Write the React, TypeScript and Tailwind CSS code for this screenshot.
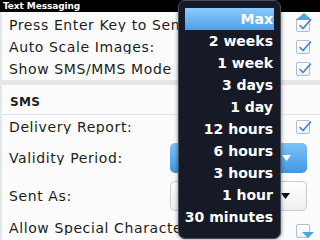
import React from "react";

const FONT = { fontFamily: '"DejaVu Sans", "Liberation Sans", sans-serif' };

const OPTIONS = ["Max", "2 weeks", "1 week", "3 days", "1 day", "12 hours", "6 hours", "3 hours", "1 hour", "30 minutes"];

function Check({ on = true }: { on?: boolean }) {
  return (
    <div className="relative w-[14px] h-[14px] rounded-[2px] border border-[#b4bcc6] bg-gradient-to-b from-white to-[#eef1f4]">
      {on && (
        <svg className="absolute left-[1px] top-[-2px]" width="14" height="14" viewBox="0 0 14 14">
          <path d="M2 8.5 L5 11.5 L12.5 3" fill="none" stroke="#3d7fd0" strokeWidth="1.6" strokeLinecap="round" strokeLinejoin="round" />
        </svg>
      )}
    </div>
  );
}

function Row({ label, children, h = "h-[22px]" }: { label: string; children?: React.ReactNode; h?: string }) {
  return (
    <div className={`flex items-center justify-between ${h} pl-[7px]`}>
      <span className="max-w-[176px] overflow-hidden text-[14px] tracking-[0.6px] leading-none text-[#1c1c1c] whitespace-nowrap">{label}</span>
      {children}
    </div>
  );
}

export default function App() {
  return (
    <div className="relative w-[320px] h-[240px] overflow-hidden bg-[#f7f8f8]" style={FONT}>
      <div className="h-[12px] bg-black flex items-center pl-[3px]">
        <span className="text-white text-[9px] font-bold leading-none tracking-[-0.1px]">Text Messaging</span>
      </div>

      <div className="bg-[#fcfcfc] border-l-2 border-[#e3e7e9]">
        <div className="h-[2px]" />
        <Row label="Press Enter Key to Send:">
          <div className="mr-[10px]"><Check /></div>
        </Row>
        <Row label="Auto Scale Images:">
          <div className="mr-[10px]"><Check /></div>
        </Row>
        <Row label="Show SMS/MMS Mode Indicator:">
          <div className="mr-[10px]"><Check /></div>
        </Row>
      </div>
      <div className="h-[5px] bg-[#e4e7e8]" />

      <div className="bg-[#fcfcfc] border-l-2 border-[#e3e7e9]">
        <div className="h-[30px] flex items-center pl-[8px] pt-[4px] border-b border-[#e0e3e5]">
          <span className="text-[12px] font-bold leading-none text-[#1c1c1c] tracking-[0.3px]">SMS</span>
        </div>
        <Row label="Delivery Report:" h="h-[24px]">
          <div className="mr-[10px]"><Check /></div>
        </Row>
        <Row label="Validity Period:" h="h-[38px]">
          <div className="mr-[13px] w-[137px] h-[30px] rounded-[5px] bg-gradient-to-b from-[#7cc2f6] to-[#3f98e2] flex items-center justify-end pr-[16px]">
            <svg width="9" height="6" viewBox="0 0 9 6"><path d="M0 0 H9 L4.5 6 Z" fill="#ffffff" /></svg>
          </div>
        </Row>
        <Row label="Sent As:" h="h-[38px]">
          <div className="mr-[13px] w-[137px] h-[30px] rounded-[5px] border border-[#c8cdd2] bg-gradient-to-b from-white to-[#eceff1] flex items-center justify-end pr-[16px]">
            <svg width="9" height="6" viewBox="0 0 9 6"><path d="M0 0 H9 L4.5 6 Z" fill="#111111" /></svg>
          </div>
        </Row>
        <Row label="Allow Special Characters:" h="h-[26px]">
          <div className="mr-[10px] mt-[6px]"><Check on={false} /></div>
        </Row>
      </div>

      {/* scroll indicators */}
      <svg className="absolute left-[296px] top-[13px]" width="16" height="7" viewBox="0 0 16 7">
        <path d="M0 7 L8 0 L16 7 Z" fill="#4aa6e6" />
      </svg>
      <svg className="absolute left-[302px] top-[232px]" width="12" height="6" viewBox="0 0 12 6">
        <path d="M0 0 H12 L6 6 Z" fill="#4aa6e6" />
      </svg>

      {/* dropdown */}
      <div className="absolute left-[178px] top-0 w-[103px] h-[239px] rounded-[7px] border border-[#4a4f5e] bg-[#161a27] pt-[7px] pl-[6px] pr-[6px] shadow-[0_0_4px_rgba(0,0,0,0.5)]">
        {OPTIONS.map((o, i) => (
          <div
            key={o}
            className={`h-[22px] flex items-center justify-end pr-[1px] text-[14px] font-bold leading-none text-white whitespace-nowrap ${
              i === 0 ? "bg-gradient-to-b from-[#8ccafa] to-[#4aa0ea]" : ""
            }`}
          >
            {o}
          </div>
        ))}
      </div>
    </div>
  );
}
